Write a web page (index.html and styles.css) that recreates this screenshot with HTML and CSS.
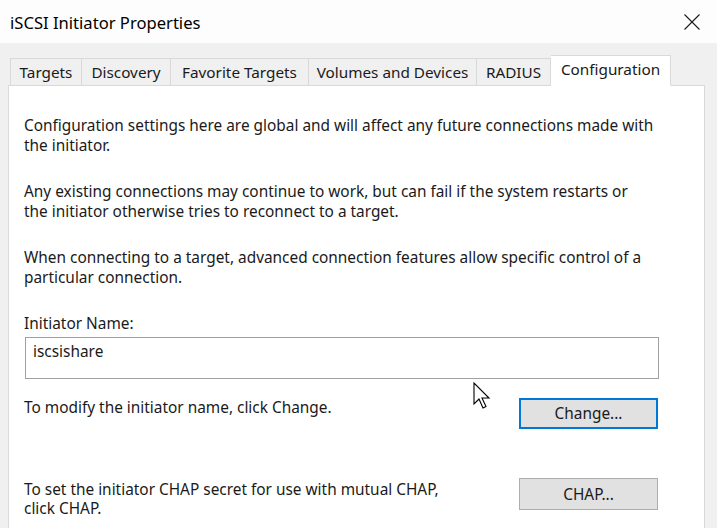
FILE: index.html
```html
<!DOCTYPE html>
<html>
<head>
<meta charset="utf-8">
<link rel="stylesheet" href="styles.css">
</head>
<body>
<div class="window">
  <div class="titlebar">
    <span class="title">iSCSI Initiator Properties</span>
    <svg class="close" width="16" height="16" viewBox="0 0 16 16"><path d="M0.5 0.5 L15.5 15.5 M15.5 0.5 L0.5 15.5" stroke="#1a1a1a" stroke-width="1.1" fill="none"/></svg>
  </div>
  <div class="body">
    <div class="tabs">
      <div class="tab t1">Targets</div>
      <div class="tab t2">Discovery</div>
      <div class="tab t3">Favorite Targets</div>
      <div class="tab t4">Volumes and Devices</div>
      <div class="tab t5">RADIUS</div>
      <div class="tab active">Configuration</div>
    </div>
    <div class="panel">
      <p class="para">Configuration settings here are global and will affect any future connections made with<br>the initiator.</p>
      <p class="para">Any existing connections may continue to work, but can fail if the system restarts or<br>the initiator otherwise tries to reconnect to a target.</p>
      <p class="para">When connecting to a target, advanced connection features allow specific control of a<br>particular connection.</p>
      <div class="label">Initiator Name:</div>
      <div class="namebox">iscsishare</div>
      <div class="row row-change">
        <span class="rowtext">To modify the initiator name, click Change.</span>
        <button class="btn focused">Change...</button>
      </div>
      <div class="row row-chap">
        <span class="rowtext">To set the initiator CHAP secret for use with mutual CHAP,<br>click CHAP.</span>
        <button class="btn">CHAP...</button>
      </div>
    </div>
  </div>
  <svg class="cursor" width="20" height="28" viewBox="0 0 20 28"><path d="M1 1 L1 22 L6 17 L10 26 L13 24.6 L9 16 L16 16 Z" fill="#fff" stroke="#000" stroke-width="1.1" stroke-linejoin="miter"/></svg>
</div>
</body>
</html>
```
FILE: styles.css
```css
* { box-sizing: border-box; }
html, body { margin: 0; padding: 0; }
body {
  width: 717px;
  height: 528px;
  overflow: hidden;
  background: #f0f0f0;
  font-family: "Noto Sans", "Open Sans", sans-serif;
  color: #1a1a1a;
}
.window { position: relative; width: 717px; height: 528px; }
.titlebar {
  height: 43px;
  background: #fdfdfd;
  display: flex;
  align-items: center;
  justify-content: space-between;
  padding: 1px 17px 0 10px;
}
.title { font-size: 16.6px; color: #000; }
.close { margin-top: 0; }
.body { padding: 12px 12px 0 8px; }
.tabs {
  display: flex;
  align-items: flex-end;
  height: 31px;
  margin-left: 2px;
  margin-bottom: -1px;
  position: relative;
  z-index: 1;
}
.tab {
  height: 28px;
  border: 1px solid #d9d9d9;
  border-left: none;
  padding: 0;
  text-align: center;
  font-size: 15.3px;
  line-height: 27px;
  background: #f0f0f0;
  color: #1a1a1a;
  white-space: nowrap;
}
.tab.t1 { width: 72px; border-left: 1px solid #d9d9d9; }
.tab.t2 { width: 89px; }
.tab.t3 { width: 138px; }
.tab.t4 { width: 168px; }
.tab.t5 { width: 74px; }
.tab.active {
  width: 120px;
  height: 31px;
  background: #fff;
  border-bottom-color: #fff;
  border-left: none;
  line-height: 27px;
}
.panel {
  background: #fff;
  border: 1px solid #d9d9d9;
  height: 460px;
  padding: 30px 40px 0 15px;
}
.para {
  margin: 0 0 26px 0;
  font-size: 15.4px;
  line-height: 20px;
  white-space: nowrap;
}
.label { font-size: 15.4px; line-height: 20px; margin-top: 1px; }
.namebox {
  margin-top: 3px;
  height: 42px;
  border: 1px solid #a0a0a0;
  padding: 4px 0 0 7px;
  font-size: 15.4px;
  line-height: 20px;
  margin-left: 1px;
  margin-right: 5px;
}
.row {
  display: flex;
  justify-content: space-between;
  align-items: flex-start;
  font-size: 15.4px;
  line-height: 20px;
  margin-right: 5px;
}
.row-change { margin-top: 19px; }
.row-chap { margin-top: 50px; }
.row-chap .rowtext { line-height: 19px; margin-top: 1px; }
.btn {
  width: 139px;
  height: 31px;
  background: #e1e1e1;
  border: 1px solid #adadad;
  font-family: inherit;
  font-size: 15.4px;
  color: #1a1a1a;
  padding: 0;
  margin-right: 1px;
}
.row-change .btn { margin-top: 0; border: 2px solid #0078d7; }
.row-chap .btn { margin-top: -1px; height: 32px; }
.cursor { position: absolute; left: 473px; top: 382px; }
```
